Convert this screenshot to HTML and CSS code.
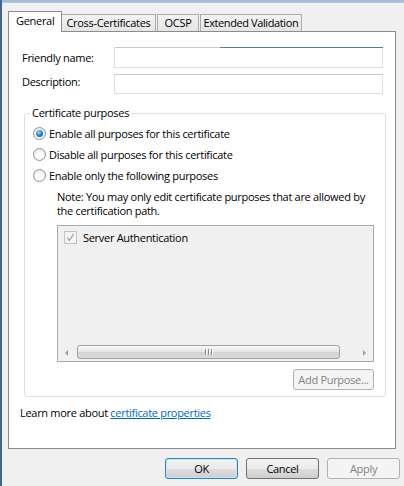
FILE: index.html
```html
<!DOCTYPE html>
<html>
<head>
<meta charset="utf-8">
<link rel="stylesheet" href="styles.css">
</head>
<body>
<div class="frame">
  <div class="titlebar"></div>
  <div class="content">
    <div class="tabs">
      <div class="tab active">General</div>
      <div class="tab">Cross-Certificates</div>
      <div class="tab tab-wide">OCSP</div>
      <div class="tab tab-narrow">Extended Validation</div>
    </div>
    <div class="panel">
      <div class="field-row">
        <span class="field-label">Friendly name:</span>
        <div class="input focus"></div>
      </div>
      <div class="field-row second">
        <span class="field-label">Description:</span>
        <div class="input"></div>
      </div>
      <fieldset class="group">
        <legend>Certificate purposes</legend>
        <div class="radio-row r1"><span class="radio checked"></span><span>Enable all purposes for this certificate</span></div>
        <div class="radio-row"><span class="radio"></span><span>Disable all purposes for this certificate</span></div>
        <div class="radio-row"><span class="radio"></span><span>Enable only the following purposes</span></div>
        <p class="note">Note: You may only edit certificate purposes that are allowed by the certification path.</p>
        <div class="listbox">
          <div class="list-items">
            <div class="list-item">
              <span class="checkbox"><svg width="11" height="11" viewBox="0 0 11 11"><path d="M2.2 5.6 L4.4 8.3 L8.8 1.8" fill="none" stroke="#a9a9a9" stroke-width="1.4"/></svg></span>
              <span>Server Authentication</span>
            </div>
          </div>
          <div class="hscroll">
            <div class="sb-btn"><span class="arrow-left"></span></div>
            <div class="sb-track">
              <div class="sb-thumb"><span class="grip"><i></i><i></i><i></i></span></div>
            </div>
            <div class="sb-btn"><span class="arrow-right"></span></div>
          </div>
        </div>
        <div class="add-row"><button class="btn disabled add">Add Purpose...</button></div>
      </fieldset>
      <p class="learn">Learn more about <a href="#" class="link">certificate properties</a></p>
    </div>
    <div class="buttons">
      <button class="btn default">OK</button>
      <button class="btn">Cancel</button>
      <button class="btn disabled">Apply</button>
    </div>
  </div>
</div>
</body>
</html>
```
FILE: styles.css
```css
* { box-sizing: border-box; }
html, body { margin: 0; padding: 0; }
body {
  width: 404px;
  height: 486px;
  overflow: hidden;
  background: #f0f0f0;
  font-family: "Open Sans", "Noto Sans", sans-serif;
  font-size: 11px;
  letter-spacing: -0.3px;
  color: #000;
}
.frame {
  height: 486px;
  border-left: 2px solid #3f6795;
}
.titlebar {
  height: 3px;
  background: linear-gradient(#9db5d4, #b9cbe2);
}
.content { padding-left: 6px; }

.tabs {
  display: flex;
  align-items: flex-end;
  height: 19px;
  margin-top: 9px;
}
.tab {
  height: 17px;
  line-height: 16px;
  padding: 0 4px;
  border: 1px solid #acacac;
  border-bottom: none;
  margin-right: 1px;
  background: linear-gradient(#f3f3f3, #e5e5e5);
  white-space: nowrap;
}
.tab.tab-wide { padding: 0 6px 0 7px; }
.tab.tab-narrow { padding: 0 3px; letter-spacing: -0.4px; }
.tab.active {
  position: relative;
  z-index: 1;
  height: 21px;
  margin-bottom: -1px;
  line-height: 18px;
  padding: 0 7px 0 7px;
  margin-right: -1px;
  background: #fff;
  border-color: #898c95;
}

.panel {
  width: 388px;
  height: 418px;
  border: 1px solid #898c95;
  background: #fff;
  padding: 15px 0 0 13px;
}

.field-row {
  display: flex;
  align-items: center;
  height: 21px;
}
.field-row.second { margin-top: 6px; height: 20px; align-items: flex-start; }
.field-label { width: 92px; line-height: 18px; }
.field-row.second .field-label { line-height: 15px; }
.input {
  position: relative;
  width: 269px;
  height: 100%;
  border: 1px solid #dbdfe6;
  border-top-color: #c6cbd2;
  background: #fff;
}
.input.focus::before {
  content: "";
  position: absolute;
  left: 105px;
  right: -1px;
  top: -1px;
  height: 1px;
  background: #5d7896;
}

.group {
  margin: 12px 0 0 2px;
  width: 362px;
  padding: 2px 11px 6px 8px;
  border: 1px solid #d5dfe5;
  border-radius: 3px;
}
.group legend {
  padding: 0 2px;
  margin-left: -3px;
  line-height: 14px;
}
.radio-row {
  display: flex;
  align-items: center;
  height: 21px;
}
.radio-row.r1 { height: 22px; }
.radio {
  width: 13px;
  height: 13px;
  margin-right: 3px;
  border-radius: 50%;
  border: 1px solid #8f9396;
  background: radial-gradient(circle at 50% 60%, #ffffff 30%, #dcdcdc 100%);
  display: flex;
  align-items: center;
  justify-content: center;
  flex-shrink: 0;
}
.radio.checked::after {
  content: "";
  width: 7px;
  height: 7px;
  border-radius: 50%;
  background: radial-gradient(circle at 40% 35%, #9fd6f6 0%, #2f83c2 50%, #103f6b 100%);
}

.note {
  margin: 4px 0 0 24px;
  line-height: 14px;
}

.listbox {
  margin: 7px 0 0 24px;
  height: 137px;
  border: 1px solid #a9a9a9;
  background: #f0f0f0;
  display: flex;
  flex-direction: column;
}
.list-items { flex: 1; padding: 2px 0 0 6px; }
.list-item {
  display: flex;
  align-items: center;
  height: 16px;
  margin-top: 1px;
}
.checkbox {
  width: 13px;
  height: 13px;
  border: 1px solid #c4c4c4;
  background: #f4f4f4;
  margin-right: 6px;
  display: flex;
  align-items: center;
  justify-content: center;
}
.checkbox svg { display: block; }

.hscroll {
  height: 17px;
  display: flex;
  align-items: stretch;
}
.sb-btn {
  width: 17px;
  display: flex;
  align-items: center;
  justify-content: center;
}
.arrow-left {
  width: 0; height: 0;
  border-top: 3px solid transparent;
  border-bottom: 3px solid transparent;
  border-right: 3px solid #a0a0a0;
}
.arrow-right {
  width: 0; height: 0;
  border-top: 3px solid transparent;
  border-bottom: 3px solid transparent;
  border-left: 3px solid #a0a0a0;
}
.sb-track { flex: 1; padding: 1px 0 2px 2px; }
.sb-thumb {
  width: 263px;
  height: 100%;
  border: 1px solid #a3a3a3;
  border-radius: 3px;
  background: linear-gradient(#f7f7f7, #e6e6e6 50%, #d4d4d4 51%, #dadada);
  display: flex;
  align-items: center;
  justify-content: center;
}
.grip { display: flex; gap: 2px; }
.grip i {
  display: block;
  width: 1px;
  height: 6px;
  background: #888;
  box-shadow: 1px 0 0 #fff;
}

.add-row {
  display: flex;
  justify-content: flex-end;
  margin-top: 7px;
}

.btn {
  font-family: inherit;
  font-size: 11px;
  letter-spacing: -0.3px;
  white-space: nowrap;
  height: 21px;
  width: 73px;
  padding: 0;
  border: 1px solid #707070;
  border-radius: 3px;
  background: linear-gradient(#f2f2f2, #ebebeb 50%, #dddddd 51%, #cfcfcf);
  color: #000;
}
.btn.default { border-color: #3c7fb1; box-shadow: inset 0 0 0 1px #bfe6f9; }
.btn.disabled {
  border-color: #adb2b5;
  background: #f4f4f4;
  color: #838383;
}
.btn.add { width: 81px; }

.learn {
  margin: 9px 0 0 -2px;
  line-height: 14px;
}
.link { color: #0066cc; text-decoration: underline; }

.buttons {
  display: flex;
  justify-content: flex-end;
  gap: 8px;
  margin-top: 9px;
  padding-right: 4px;
}
```
